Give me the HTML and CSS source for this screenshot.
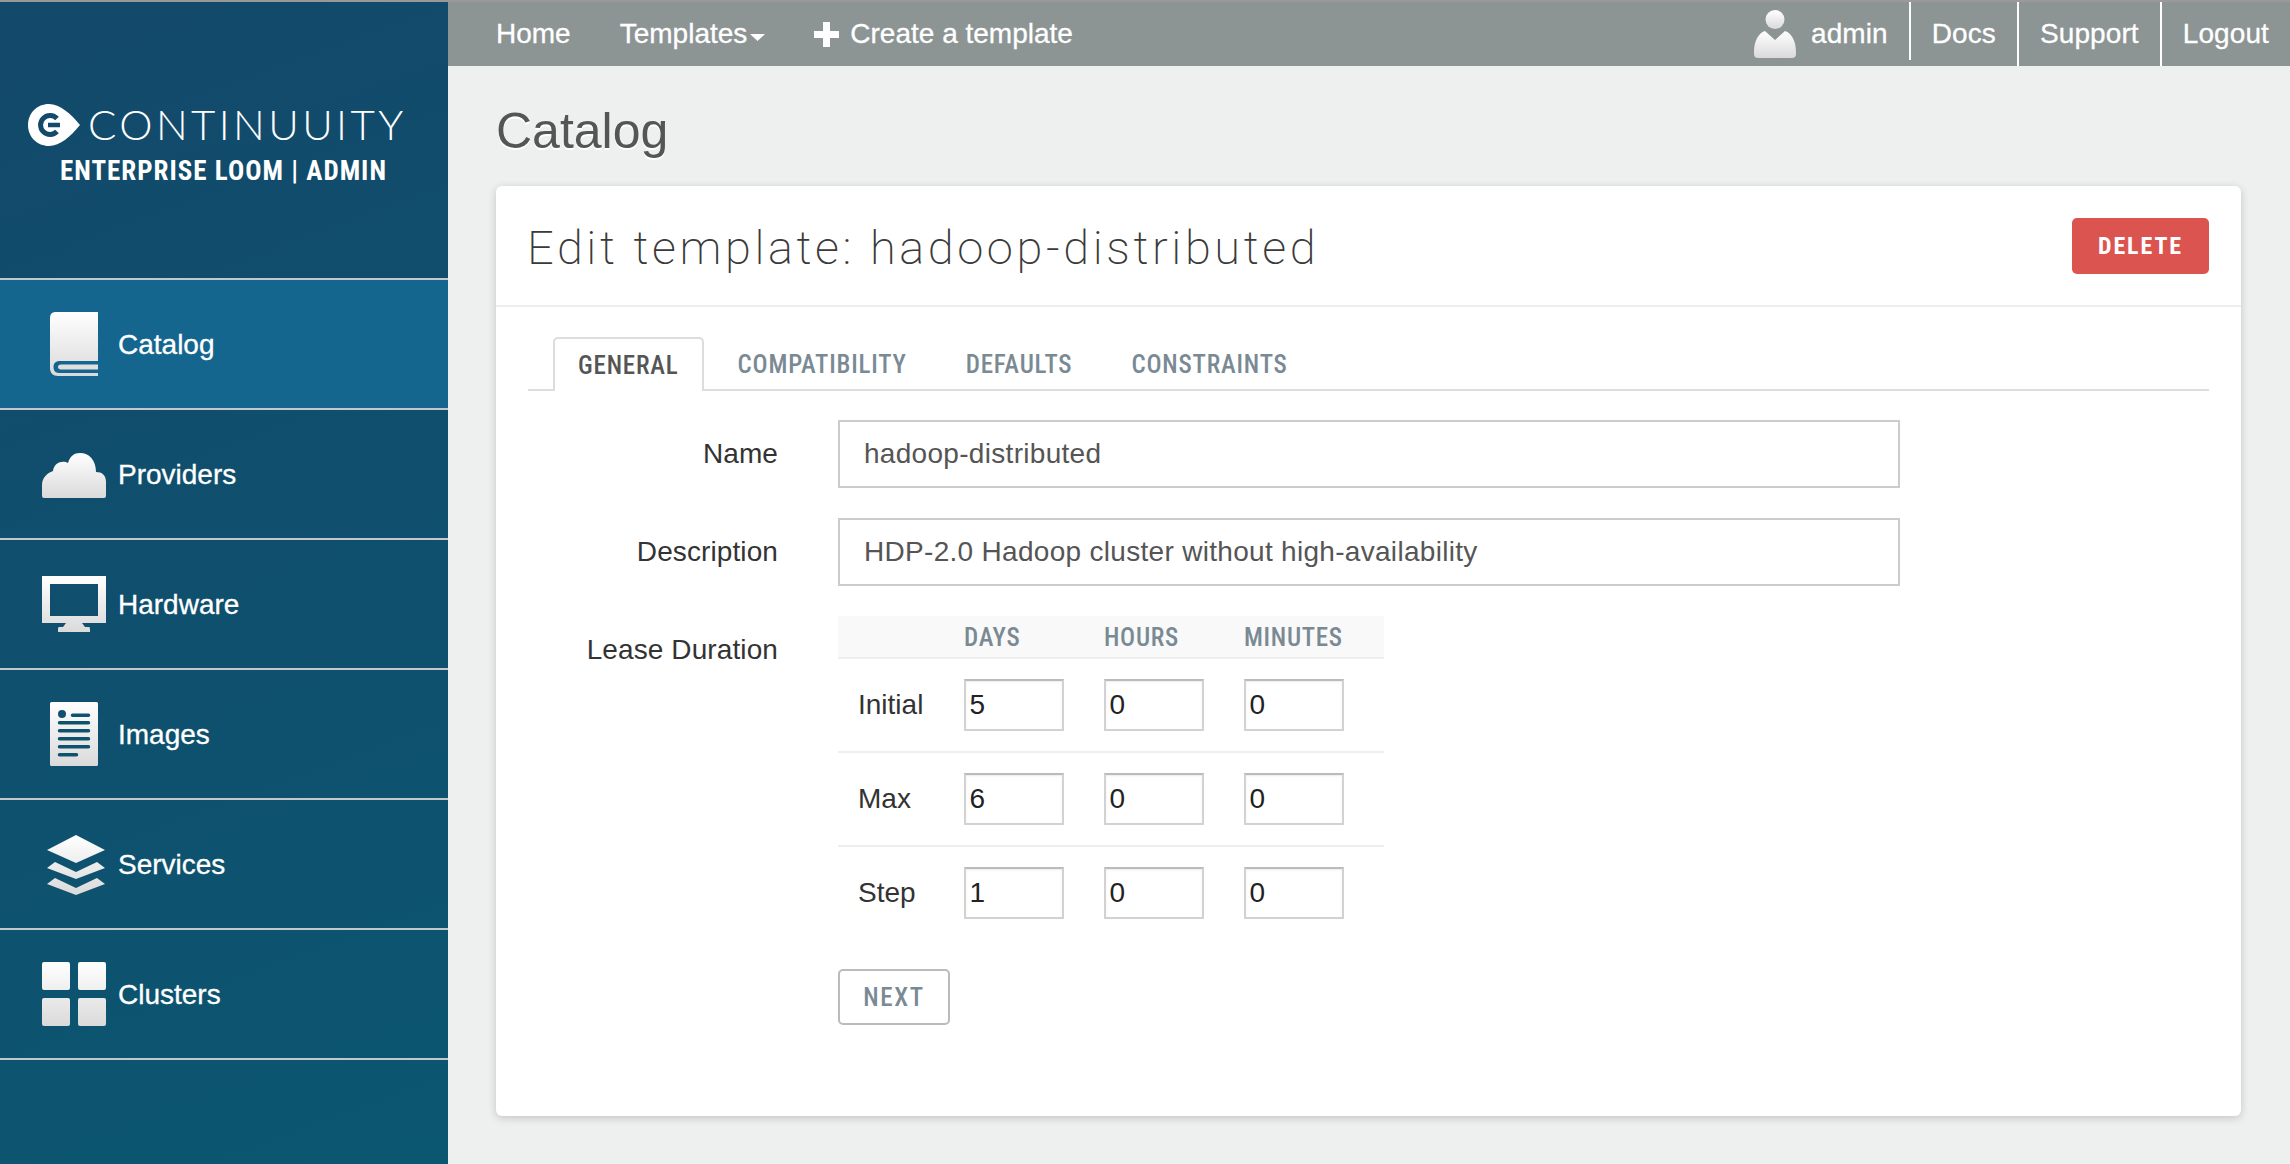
FILE: index.html
```html
<!DOCTYPE html>
<html>
<head>
	<title>Catalog</title>
	<meta charset="utf-8">
	<link rel="stylesheet" href="styles.css">
</head>
<body>
	<svg class="defs" width="0" height="0">
		<defs>
			<linearGradient id="iconfill" x1="0" y1="0" x2="0" y2="1">
				<stop offset="0" stop-color="#ffffff"/>
				<stop offset="1" stop-color="#dadada"/>
			</linearGradient>
		</defs>
	</svg>

	<div class="page">
		<div class="sidebar">
			<div class="brand">
				<div class="brand-top">
					<svg class="brand-mark" viewBox="0 0 52 42" width="52" height="42">
						<path fill="#fff" d="M21 0C32 0 43 10 52 21C43 32 32 42 21 42C9 42 0 33 0 21C0 9 9 0 21 0Z"/>
						<path fill="none" stroke="#13496a" stroke-width="5" d="M29 14.5A9.5 9.5 0 1 0 29 27.500"/>
						<path fill="none" stroke="#13496a" stroke-width="4.500" d="M20 21H32"/>
					</svg>
					<span class="brand-name">CONTINUUITY</span>
				</div>
				<div class="brand-sub">ENTERPRISE LOOM | ADMIN</div>
			</div>

			<a class="side-item active">
				<svg class="side-icon" viewBox="0 0 64 64"><path fill="url(#iconfill)" d="M14 0H56V46H18C13 46 8 48 8 52V6C8 2 10 0 14 0ZM8 52V56C8 61 11 64 16 64H56V61H17C13 61 11.500 58 11.500 55C11.500 51 14 49 18 49H56V46H18C13 46 8 48 8 52ZM19 52.500H56V57.500H19C17 57.500 16 56.500 16 55S17 52.500 19 52.500Z"/></svg>
				<span>Catalog</span>
			</a>
			<a class="side-item">
				<svg class="side-icon" viewBox="0 0 64 64"><path fill="url(#iconfill)" d="M2 56H62Q64 56 64 54V40C64 33 60 30 54 30C54 18 47 11 38 11C32 11 28 14 26 21C21 18 12 20 11 29C5 31 0 36 0 43V54Q0 56 2 56Z"/></svg>
				<span>Providers</span>
			</a>
			<a class="side-item">
				<svg class="side-icon" viewBox="0 0 64 64"><path fill="url(#iconfill)" fill-rule="evenodd" d="M0 4H64V51H0ZM8 12V44H56V12ZM24 51H40L43 55H47Q48 55 48 57V60H16V57Q16 55 17 55H21Z"/></svg>
				<span>Hardware</span>
			</a>
			<a class="side-item">
				<svg class="side-icon" viewBox="0 0 64 64"><path fill="url(#iconfill)" fill-rule="evenodd" d="M9.500 0H54.500Q56 0 56 1.500V62.500Q56 64 54.500 64H9.500Q8 64 8 62.500V1.500Q8 0 9.500 0ZM20 8A4 4 0 1 0 20 16A4 4 0 1 0 20 8ZM30.500 11.500A1.750 1.750 0 0 0 30.500 15H46.500A1.750 1.750 0 0 0 46.500 11.500ZM17.500 19A1.750 1.750 0 0 0 17.500 22.500H46.500A1.750 1.750 0 0 0 46.500 19ZM17.500 27A1.750 1.750 0 0 0 17.500 30.500H46.500A1.750 1.750 0 0 0 46.500 27ZM17.500 35A1.750 1.750 0 0 0 17.500 38.500H46.500A1.750 1.750 0 0 0 46.500 35ZM17.500 43A1.750 1.750 0 0 0 17.500 46.500H46.500A1.750 1.750 0 0 0 46.500 43ZM17.500 51A1.750 1.750 0 0 0 17.500 54.500H34.500A1.750 1.750 0 0 0 34.500 51Z"/></svg>
				<span>Images</span>
			</a>
			<a class="side-item">
				<svg class="side-icon" viewBox="0 0 64 64"><path fill="url(#iconfill)" d="M34 3L63 18L34 31L5 18ZM5 36L13 30L34 40L55 30L63 36L34 47ZM5 52L13 46L34 56L55 46L63 52L34 63Z"/></svg>
				<span>Services</span>
			</a>
			<a class="side-item">
				<svg class="side-icon" viewBox="0 0 64 64"><path fill="url(#iconfill)" d="M2 0H26Q28 0 28 2V26Q28 28 26 28H2Q0 28 0 26V2Q0 0 2 0ZM38 0H62Q64 0 64 2V26Q64 28 62 28H38Q36 28 36 26V2Q36 0 38 0ZM2 36H26Q28 36 28 38V62Q28 64 26 64H2Q0 64 0 62V38Q0 36 2 36ZM38 36H62Q64 36 64 38V62Q64 64 62 64H38Q36 64 36 62V38Q36 36 38 36Z"/></svg>
				<span>Clusters</span>
			</a>
		</div>

		<div class="main">
			<div class="topbar">
				<div class="topnav">
					<a>Home</a>
					<a class="drop">Templates<svg class="caret" viewBox="0 0 15 7" width="15" height="7"><path fill="#fff" d="M0 0H15L7.500 7Z"/></svg></a>
					<a class="create"><svg viewBox="0 0 25 25" width="25" height="25"><path fill="#fff" d="M9 0H16V9H25V16H16V25H9V16H0V9H9Z"/></svg>Create a template</a>
				</div>
				<div class="usernav">
					<a class="user">
						<svg viewBox="0 0 42 48" width="42" height="48">
							<circle cx="21" cy="9.500" r="9.500" fill="url(#iconfill)"/>
							<path fill="url(#iconfill)" d="M11 21L21 30L31 21C38 23 42 32 42 42V44Q42 48 38 48H4Q0 48 0 44V42C0 32 4 23 11 21Z"/>
						</svg>
						<span class="user-name">admin</span>
					</a>
					<a class="link">Docs</a>
					<a class="link">Support</a>
					<a class="link last">Logout</a>
				</div>
			</div>

			<h1 class="page-title">Catalog</h1>

			<div class="card">
				<div class="card-head">
					<h2>Edit template: hadoop-distributed</h2>
					<button class="btn-delete">DELETE</button>
				</div>

				<div class="card-body">
					<ul class="tabs">
						<li class="tab active">GENERAL</li>
						<li class="tab">COMPATIBILITY</li>
						<li class="tab">DEFAULTS</li>
						<li class="tab">CONSTRAINTS</li>
					</ul>

					<form class="form">
						<label class="form-label">Name</label>
						<input class="form-input" type="text" value="hadoop-distributed">

						<label class="form-label">Description</label>
						<input class="form-input" type="text" value="HDP-2.0 Hadoop cluster without high-availability">

						<label class="form-label">Lease Duration</label>
						<table class="lease-table">
							<tr>
								<th></th>
								<th>DAYS</th>
								<th>HOURS</th>
								<th>MINUTES</th>
							</tr>
							<tr>
								<td>Initial</td>
								<td><input type="text" value="5"></td>
								<td><input type="text" value="0"></td>
								<td><input type="text" value="0"></td>
							</tr>
							<tr>
								<td>Max</td>
								<td><input type="text" value="6"></td>
								<td><input type="text" value="0"></td>
								<td><input type="text" value="0"></td>
							</tr>
							<tr>
								<td>Step</td>
								<td><input type="text" value="1"></td>
								<td><input type="text" value="0"></td>
								<td><input type="text" value="0"></td>
							</tr>
						</table>

						<div class="form-actions">
							<button class="btn-next" type="button">NEXT</button>
						</div>
					</form>
				</div>
			</div>
		</div>
	</div>
</body>
</html>
```

FILE: styles.css
```css
* {box-sizing: border-box;}

html, body
{
	margin: 0px;
	padding: 0px;
	height: 100%;
}

body
{
	background: #EEF0EF;
	border-top: 2px solid #999;
	color: #333;
	font-family: "Liberation Sans", Arial, sans-serif;
	font-size: 28px;
	overflow: hidden;
}

.defs {position: absolute;}

.page
{
	display: flex;
	height: 100%;
}

/* left column */
.sidebar
{
	width: 448px;
	flex: none;
	background: linear-gradient(160deg, #13496A, #0B5671);
	color: white;
	-webkit-text-stroke: 0.3px white;
}

.brand
{
	height: 276px;
	padding: 102px 0px 0px 28px;
}

.brand-top
{
	display: flex;
	align-items: center;
}

.brand-name
{
	margin: -3px 0px 0px 8px;
	font-family: "Lato", sans-serif;
	font-weight: 300;
	font-size: 42px;
	line-height: 42px;
	letter-spacing: 3.4px;
	-webkit-text-stroke: 0px;
}

.brand-sub
{
	margin: 8px 0px 0px 32px;
	font-family: "Roboto Condensed", "Roboto", sans-serif;
	font-weight: bold;
	font-size: 27px;
	line-height: 34px;
	letter-spacing: 1px;
	white-space: nowrap;
	-webkit-text-stroke: 0px;
}

.side-item
{
	display: flex;
	align-items: center;
	gap: 12px;
	height: 130px;
	padding-left: 42px;
	border-top: 2px solid #C4C8CA;
}

.side-item span {margin-top: 2px;}

.side-item:last-child {height: 132px; border-bottom: 2px solid #C4C8CA;}

.side-item.active {background: #14668F;}

.side-icon
{
	width: 64px;
	height: 64px;
	flex: none;
}

/* top bar */
.main
{
	flex: 1;
	min-width: 0px;
}

.topbar
{
	display: flex;
	justify-content: space-between;
	height: 64px;
	background: #8C9494;
	color: white;
	-webkit-text-stroke: 0.3px white;
}

.topnav
{
	display: flex;
	align-items: center;
	gap: 49px;
	padding-left: 48px;
}

.topnav a
{
	display: flex;
	align-items: center;
}

.caret {margin-left: 3px; margin-top: 6px;}

.create svg {margin-right: 11px;}

.usernav
{
	display: flex;
	letter-spacing: 0.1px;
}

.usernav a
{
	display: flex;
	align-items: center;
	padding: 0px 21px;
	border-right: 2px solid white;
}

.usernav .user
{
	gap: 15px;
	height: 58px;
}

.usernav .user svg {margin-top: 6px;}

.user-name {margin-top: 5px;}

.usernav .last {border-right: none; padding-right: 21px;}

/* content */
.page-title
{
	height: 120px;
	margin: 0px 0px 0px 48px;
	color: #555;
	font-size: 50px;
	font-weight: normal;
	line-height: 130px;
	text-shadow: 0px 2px 0px #FFF;
}

.card
{
	height: 930px;
	margin: 0px 49px 0px 48px;
	background: white;
	border-radius: 6px;
	box-shadow: 0px 2px 8px rgba(0, 0, 0, 0.18);
}

.card-head
{
	display: flex;
	justify-content: space-between;
	align-items: center;
	height: 121px;
	padding: 0px 32px 0px 31px;
	border-bottom: 2px solid #EEE;
}

.card-head h2
{
	margin: 4px 0px 0px;
	color: #3A3A3A;
	font-family: "Roboto", sans-serif;
	font-size: 47px;
	font-weight: 200;
	letter-spacing: 3.57px;
}

.btn-delete
{
	width: 137px;
	height: 56px;
	padding: 0px;
	background: #DB5450;
	border: none;
	border-radius: 5px;
	color: white;
	font-family: "Roboto Condensed", "Roboto", sans-serif;
	font-size: 24px;
	font-weight: bold;
	letter-spacing: 1.9px;
}

.card-body {padding: 30px 32px 0px;}

.tabs
{
	display: flex;
	margin: 0px;
	padding: 0px 0px 0px 25px;
	height: 54px;
	list-style: none;
	border-bottom: 2px solid #DDD;
}

.tab
{
	height: 54px;
	padding: 0px 25px;
	margin-right: 9px;
	color: #7A8A94;
	font-family: "Roboto Condensed", "Roboto", sans-serif;
	font-size: 25px;
	font-weight: 500;
	line-height: 56px;
	letter-spacing: 0.8px;
}

.tab.active
{
	padding: 0px 23px;
	background: white;
	border: 2px solid #DDD;
	border-bottom: none;
	border-radius: 5px 5px 0px 0px;
	color: #555;
	line-height: 54px;
}

/* form */
.form
{
	display: grid;
	grid-template-columns: 250px 1062px;
	column-gap: 60px;
	row-gap: 30px;
	margin-top: 29px;
}

.form-label
{
	color: #333;
	text-align: right;
	line-height: 68px;
	letter-spacing: 0.1px;
}

.form-input
{
	height: 68px;
	padding: 0px 24px;
	border: 2px solid #CCC;
	color: #555;
	font-family: inherit;
	font-size: 28px;
	letter-spacing: 0.3px;
	outline: none;
}

.lease-table
{
	width: 546px;
	border-collapse: collapse;
	table-layout: fixed;
}

.lease-table th
{
	height: 42px;
	padding: 2px 0px 0px;
	background: #F9F9F9;
	border-bottom: 2px solid #EEE;
	color: #7A8A94;
	font-family: "Roboto Condensed", "Roboto", sans-serif;
	font-size: 25px;
	font-weight: 500;
	letter-spacing: 0.7px;
	text-align: left;
}

.lease-table th:first-child, .lease-table td:first-child {width: 126px;}

.lease-table td
{
	padding: 20px 0px;
	border-bottom: 2px solid #EEE;
	color: #333;
}

.lease-table td:first-child {padding-left: 20px;}

.lease-table tr:last-child td {border-bottom: none;}

.lease-table input
{
	display: block;
	width: 100px;
	height: 52px;
	padding: 0px 3.5px;
	border: 2px solid #D2D2D2;
	border-top-color: #BBB;
	box-shadow: inset 0px 1px 2px rgba(0, 0, 0, 0.08);
	color: #222;
	font-family: inherit;
	font-size: 28px;
	outline: none;
}

.form-actions {grid-column: 2;}

.btn-next
{
	width: 112px;
	height: 56px;
	padding: 0px;
	background: white;
	border: 2px solid #BBB;
	border-radius: 5px;
	color: #7A8A94;
	font-family: "Roboto Condensed", "Roboto", sans-serif;
	font-size: 25px;
	font-weight: 500;
	letter-spacing: 1.7px;
}
```
